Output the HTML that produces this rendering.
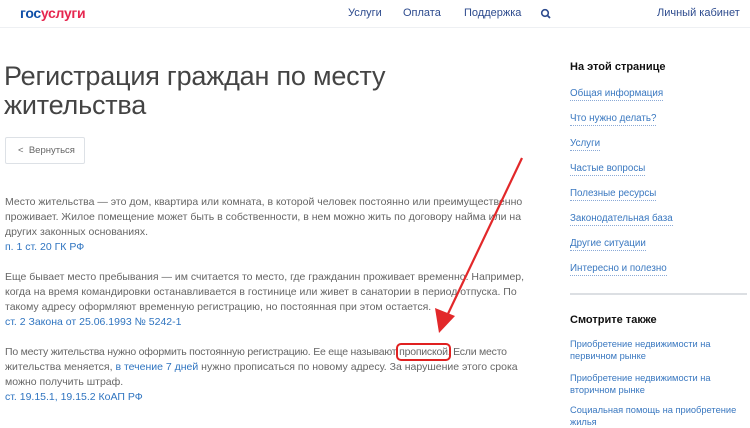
<!DOCTYPE html>
<html><head><meta charset="utf-8"><style>
*{margin:0;padding:0;box-sizing:border-box}
body{width:750px;height:426px;overflow:hidden;background:#fff;font-family:"Liberation Sans",sans-serif;position:relative;color:#555}
.a{position:absolute;white-space:nowrap}
.nav{font-size:11px;color:#2d4b8e}
.hdr{position:absolute;left:0;top:0;width:750px;height:28px;border-bottom:1px solid #eef0f3}
.p{font-size:10.5px;color:#666;line-height:15px}
.l{color:#2f74c0}
.s{font-size:9.8px;color:#3a78c0;border-bottom:1px dotted #8aa9d6;line-height:12px}
.s2{font-size:9.3px;color:#3a78c0;line-height:12px}
</style></head><body>
<div class="hdr"></div>
<div class="a" style="left:20px;top:5px;font-size:14px;font-weight:bold;color:#0f4fa8;letter-spacing:-0.3px">гос<span style="color:#e6264f">услуги</span></div>
<div class="a nav" style="left:348px;top:7px">Услуги</div>
<div class="a nav" style="left:403px;top:7px">Оплата</div>
<div class="a nav" style="left:464px;top:7px">Поддержка</div>
<svg class="a" style="left:540px;top:8px" width="12" height="12" viewBox="0 0 12 12"><circle cx="5" cy="5" r="3.3" fill="none" stroke="#2d4b8e" stroke-width="1.6"/><path d="M7.5 7.5L10 10" stroke="#2d4b8e" stroke-width="1.8"/></svg>
<div class="a nav" style="left:657px;top:7px">Личный кабинет</div>

<div class="a" style="left:4px;top:62px;font-size:27px;line-height:29px;color:#444;letter-spacing:-0.2px">Регистрация граждан по месту<br>жительства</div>

<div class="a" style="left:5px;top:137px;width:80px;height:27px;border:1px solid #dde1e6;border-radius:2px;font-size:9.5px;color:#666;line-height:25px;padding-left:12px">&lt;&nbsp;&nbsp;Вернуться</div>

<div class="a p" style="left:5px;top:195px">Место жительства — это дом, квартира или комната, в которой человек постоянно или преимущественно<br>проживает. Жилое помещение может быть в собственности, в нем можно жить по договору найма или на<br>других законных основаниях.<br><span class="l">п. 1 ст. 20 ГК РФ</span></div>

<div class="a p" style="left:5px;top:270px">Еще бывает место пребывания — им считается то место, где гражданин проживает временно. Например,<br>когда на время командировки останавливается в гостинице или живет в санатории в период отпуска. По<br>такому адресу оформляют временную регистрацию, но постоянная при этом остается.<br><span class="l">ст. 2 Закона от 25.06.1993 № 5242-1</span></div>

<div class="a p" style="left:5px;top:345px"><span style="letter-spacing:-0.22px">По месту жительства нужно оформить постоянную регистрацию. Ее еще называют <span style="outline:2px solid #e02020;outline-offset:1px;border-radius:2px">пропиской</span>. Если место</span><br>жительства меняется, <span class="l">в течение 7 дней</span> нужно прописаться по новому адресу. За нарушение этого срока<br>можно получить штраф.<br><span class="l">ст. 19.15.1, 19.15.2 КоАП РФ</span></div>

<svg class="a" style="left:0;top:0" width="750" height="426"><path d="M522 158L446 318" stroke="#e2282a" stroke-width="2.2"/><path d="M439 333L435 308L455 316Z" fill="#e2282a"/></svg>

<div class="a" style="left:570px;top:61px;font-size:11px;font-weight:bold;color:#111">На этой странице</div>
<div class="a s" style="left:570px;top:88px">Общая информация</div>
<div class="a s" style="left:570px;top:113px">Что нужно делать?</div>
<div class="a s" style="left:570px;top:138px">Услуги</div>
<div class="a s" style="left:570px;top:163px">Частые вопросы</div>
<div class="a s" style="left:570px;top:188px">Полезные ресурсы</div>
<div class="a s" style="left:570px;top:213px">Законодательная база</div>
<div class="a s" style="left:570px;top:238px">Другие ситуации</div>
<div class="a s" style="left:570px;top:263px">Интересно и полезно</div>
<div class="a" style="left:570px;top:293px;width:177px;height:2px;background:#dcdfe3"></div>
<div class="a" style="left:570px;top:314px;font-size:11px;font-weight:bold;color:#111">Смотрите также</div>
<div class="a s2" style="left:570px;top:338px">Приобретение недвижимости на<br>первичном рынке</div>
<div class="a s2" style="left:570px;top:372px">Приобретение недвижимости на<br>вторичном рынке</div>
<div class="a s2" style="left:570px;top:404px">Социальная помощь на приобретение<br>жилья</div>
</body></html>
